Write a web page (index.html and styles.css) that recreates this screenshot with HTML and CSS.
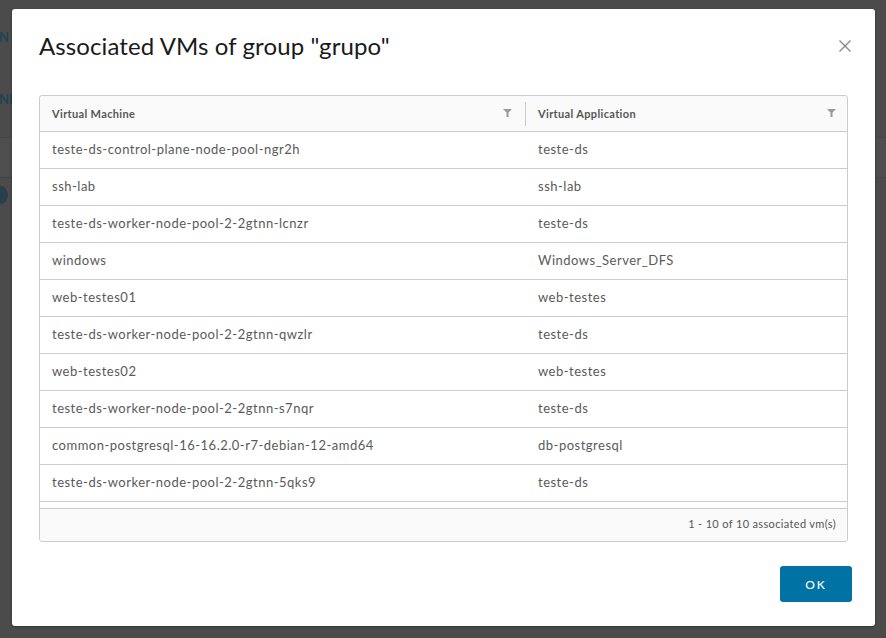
FILE: index.html
```html
<!DOCTYPE html>
<html>
<head>
<meta charset="utf-8">
<link rel="stylesheet" href="styles.css">
</head>
<body>
<div class="backdrop">
  <div class="bg-nav"><span class="bg-letter">N</span></div>
  <div class="bg-tabs"><span class="bg-letter">NE</span></div>
  <div class="bg-band"></div>
  <div class="bg-row"><span class="bg-dot"></span></div>
</div>
<div class="modal">
  <div class="modal-header">
    <h1 class="modal-title">Associated VMs of group "grupo"</h1>
    <button class="close" aria-label="Close">
      <svg width="14" height="14" viewBox="0 0 14 14"><path d="M1.5 1.5 L12.5 12.5 M12.5 1.5 L1.5 12.5" stroke="#8a8a8a" stroke-width="1.4" fill="none"/></svg>
    </button>
  </div>
  <div class="grid">
    <div class="grid-head">
      <div class="col col-vm">
        <span class="head-label">Virtual Machine</span>
        <svg class="filter" width="9" height="8" viewBox="0 0 9 8"><path d="M0 0 H9 L5.5 3.5 V8 H3.5 V3.5 Z" fill="#9a9a9a"/></svg>
        <span class="sep"></span>
      </div>
      <div class="col col-app">
        <span class="head-label">Virtual Application</span>
        <svg class="filter" width="9" height="8" viewBox="0 0 9 8"><path d="M0 0 H9 L5.5 3.5 V8 H3.5 V3.5 Z" fill="#9a9a9a"/></svg>
      </div>
    </div>
    <div class="grid-body">
      <div class="row"><div class="col col-vm">teste-ds-control-plane-node-pool-ngr2h</div><div class="col col-app">teste-ds</div></div>
      <div class="row"><div class="col col-vm">ssh-lab</div><div class="col col-app">ssh-lab</div></div>
      <div class="row"><div class="col col-vm">teste-ds-worker-node-pool-2-2gtnn-lcnzr</div><div class="col col-app">teste-ds</div></div>
      <div class="row"><div class="col col-vm">windows</div><div class="col col-app">Windows_Server_DFS</div></div>
      <div class="row"><div class="col col-vm">web-testes01</div><div class="col col-app">web-testes</div></div>
      <div class="row"><div class="col col-vm">teste-ds-worker-node-pool-2-2gtnn-qwzlr</div><div class="col col-app">teste-ds</div></div>
      <div class="row"><div class="col col-vm">web-testes02</div><div class="col col-app">web-testes</div></div>
      <div class="row"><div class="col col-vm">teste-ds-worker-node-pool-2-2gtnn-s7nqr</div><div class="col col-app">teste-ds</div></div>
      <div class="row"><div class="col col-vm">common-postgresql-16-16.2.0-r7-debian-12-amd64</div><div class="col col-app">db-postgresql</div></div>
      <div class="row"><div class="col col-vm">teste-ds-worker-node-pool-2-2gtnn-5qks9</div><div class="col col-app">teste-ds</div></div>
    </div>
    <div class="grid-foot">1 - 10 of 10 associated vm(s)</div>
  </div>
  <div class="modal-footer">
    <button class="btn-primary">OK</button>
  </div>
</div>
</body>
</html>
```
FILE: styles.css
```css
* { box-sizing: border-box; }
html, body { margin: 0; padding: 0; }
body {
  width: 886px;
  height: 638px;
  overflow: hidden;
  background: #4b4b4b;
  font-family: "Lato", "Open Sans", sans-serif;
  position: relative;
}
.backdrop { width: 886px; height: 638px; }
.bg-nav { height: 60px; padding-top: 26px; }
.bg-letter { color: #1d4555; font-size: 13px; font-weight: 700; margin-left: -1px; }
.bg-tabs { height: 78px; padding-top: 28px; border-bottom: 1px solid #444; }
.bg-band { height: 40px; background: #4e4e4e; border-bottom: 1px solid #444; }
.bg-row { height: 40px; position: relative; }
.bg-dot { position: absolute; left: -6px; top: 8px; width: 14px; height: 18px; border-radius: 50%; background: #26414c; }

.modal {
  position: absolute;
  left: 12px;
  top: 9px;
  width: 863px;
  height: 617px;
  background: #fff;
  border-radius: 3px;
  box-shadow: 0 1px 3px rgba(0,0,0,0.3);
  padding: 0 27px;
  display: flex;
  flex-direction: column;
}
.modal-header {
  display: flex;
  justify-content: space-between;
  align-items: flex-start;
  padding-top: 22px;
  height: 86px;
}
.modal-title {
  margin: 0;
  font-weight: 400;
  font-size: 24px;
  line-height: 30px;
  color: #1a1a1a;
  letter-spacing: 0.1px;
}
.close {
  background: none;
  border: 0;
  padding: 0;
  margin-top: 8px;
  margin-right: -4px;
  width: 14px;
  height: 14px;
  display: flex;
}
.grid {
  border: 1px solid #ccc;
  border-radius: 3px;
  display: flex;
  flex-direction: column;
  height: 447px;
}
.grid-head {
  display: flex;
  height: 36px;
  background: #fafafa;
  border-bottom: 1px solid #ccc;
  border-radius: 3px 3px 0 0;
}
.grid-head .col {
  display: flex;
  align-items: center;
  position: relative;
  font-size: 11px;
  font-weight: 700;
  color: #565656;
  letter-spacing: 0.35px;
  padding-bottom: 1px;
}
.head-label { flex: 1; }
.filter { margin-right: 2px; }
.sep { position: absolute; right: 0; top: 6px; width: 1px; height: 24px; background: #ccc; }
.col-vm { width: 486px; padding: 0 12px 0 12px; }
.col-app { flex: 1; padding: 0 10px 0 12px; }
.grid-head .col-app .filter { margin-right: 1px; }
.grid-body { height: 376px; }
.row {
  display: flex;
  height: 37px;
  border-bottom: 1px solid #ccc;
  align-items: center;
  font-size: 13px;
  letter-spacing: 0.5px;
  color: #5a5a5a;
  padding-bottom: 3px;
}
.grid-foot {
  flex: 1;
  border-top: 1px solid #ccc;
  background: #fafafa;
  font-size: 11px;
  letter-spacing: 0.35px;
  color: #565656;
  display: flex;
  align-items: center;
  justify-content: flex-end;
  padding-right: 11px;
  padding-bottom: 3px;
  border-radius: 0 0 3px 3px;
}
.modal-footer {
  display: flex;
  justify-content: flex-end;
  padding-top: 24px;
  margin-right: -4px;
}
.btn-primary {
  width: 72px;
  height: 36px;
  background: #0072a3;
  color: #fff;
  border: 0;
  border-radius: 3px;
  font-family: "Lato", sans-serif;
  font-size: 12px;
  letter-spacing: 1.8px;
  font-weight: 500;
}
```
